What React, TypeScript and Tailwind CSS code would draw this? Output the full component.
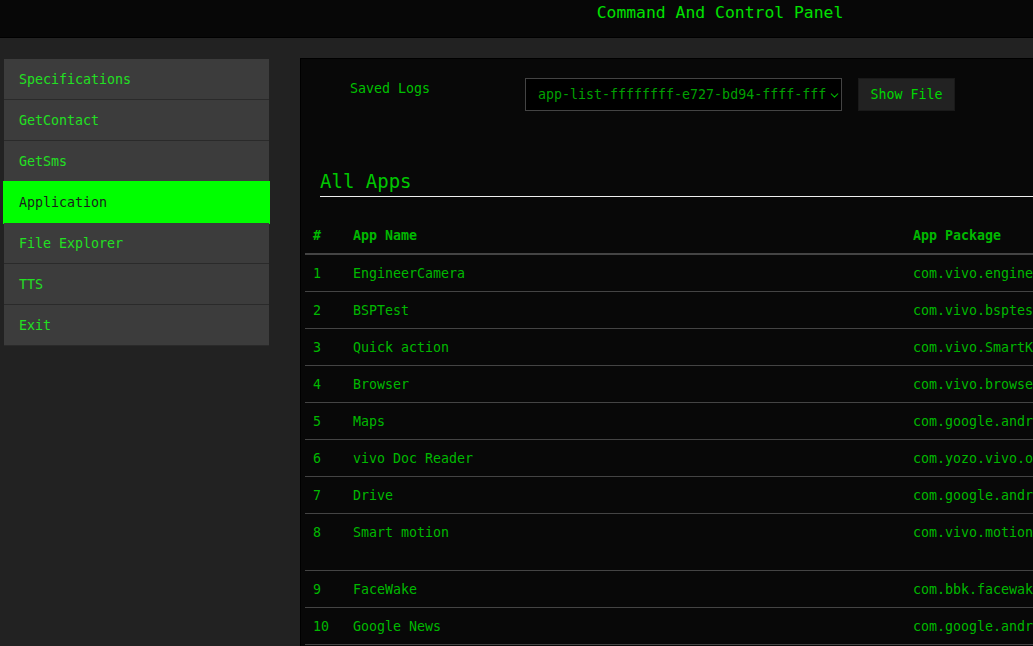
import { ChevronDown } from 'lucide-react';

const menu = ['Specifications', 'GetContact', 'GetSms', 'Application', 'File Explorer', 'TTS', 'Exit'];

const apps = [
  { name: 'EngineerCamera', pkg: 'com.vivo.engineercamera' },
  { name: 'BSPTest', pkg: 'com.vivo.bsptest' },
  { name: 'Quick action', pkg: 'com.vivo.SmartKey' },
  { name: 'Browser', pkg: 'com.vivo.browser' },
  { name: 'Maps', pkg: 'com.google.android.apps.maps' },
  { name: 'vivo Doc Reader', pkg: 'com.yozo.vivo.office' },
  { name: 'Drive', pkg: 'com.google.android.apps.docs' },
  { name: 'Smart motion', pkg: 'com.vivo.motionrecognition', tall: true },
  { name: 'FaceWake', pkg: 'com.bbk.facewake' },
  { name: 'Google News', pkg: 'com.google.android.apps.magazines' },
  { name: 'Settings', pkg: 'com.android.settings' },
  { name: 'Calculator', pkg: 'com.android.bbkcalculator' },
];

export default function App() {
  return (
    <div className="h-[646px] w-full overflow-hidden bg-[#222222] text-[13.3px] leading-4 [font-family:'DejaVu_Sans_Mono',monospace]">
      <div className="w-[1440px]">
        <header className="flex h-[38px] justify-center border-b border-black bg-[#070707] pt-[3px]">
          <h1 className="text-[16.4px] leading-[19px] text-[#00e000]">Command And Control Panel</h1>
        </header>

        <div className="flex pt-5">
          <nav className="w-[300px] shrink-0 pl-1 pt-px">
            <ul className="w-[265px]">
              {menu.map((item) => {
                const active = item === 'Application';
                return (
                  <li
                    key={item}
                    className={
                      active
                        ? 'flex h-[41px] items-center bg-[#00ff00] pt-px pl-[15px] text-[#1c1c1c] shadow-[0_0_0_1px_#00ff00]'
                        : 'flex h-[41px] items-center border-b border-[#2a2a2a] bg-[#3c3c3c] pt-px pl-[15px] text-[#22e022]'
                    }
                  >
                    {item}
                  </li>
                );
              })}
            </ul>
          </nav>

          <main className="min-h-[620px] flex-1 border-t border-l border-black bg-[#080808] pb-10">
            <div className="flex items-start pt-[19px]">
              <span className="mt-[3px] w-[224px] pl-[49px] text-[#00c000]">Saved Logs</span>
              <div className="flex h-[33px] w-[317px] items-center overflow-hidden border border-[#444] bg-black pt-px pr-[2px] pl-[12px]">
                <span className="w-[288px] shrink-0 overflow-hidden whitespace-nowrap text-[#00a000]">app-list-ffffffff-e727-bd94-ffff-fff</span>
                <ChevronDown className="ml-[2px] h-[13px] w-[13px] shrink-0 text-[#00b000]" strokeWidth={2} />
              </div>
              <button
                type="button"
                className="ml-4 h-[33px] w-[97px] border border-[#1a1a1a] bg-[#222222] pt-px text-[#00d800]"
              >
                Show File
              </button>
            </div>

            <h2 className="mt-[59px] ml-[19px] border-b border-[#eeeeee] pb-[3px] text-[19px] leading-[23px] text-[#00c800]">
              All Apps
            </h2>

            <table className="mt-5 ml-1 w-[1130px] table-fixed border-collapse text-left text-[#00b800]">
              <colgroup>
                <col className="w-[40px]" />
                <col className="w-[560px]" />
                <col />
              </colgroup>
              <thead>
                <tr className="border-b-2 border-[#444]">
                  <th className="px-2 pt-[11px] pb-[9px] font-bold">#</th>
                  <th className="px-2 pt-[11px] pb-[9px] font-bold">App Name</th>
                  <th className="px-2 pt-[11px] pb-[9px] font-bold">App Package</th>
                </tr>
              </thead>
              <tbody>
                {apps.map((a, i) => (
                  <tr key={a.pkg} className="border-b border-[#444]">
                    <td className={a.tall ? 'px-2 pt-[11px] pb-[29px] align-top' : 'px-2 pt-[11px] pb-[9px] align-top'}>{i + 1}</td>
                    <td className={a.tall ? 'px-2 pt-[11px] pb-[29px] align-top' : 'px-2 pt-[11px] pb-[9px] align-top'}>{a.name}</td>
                    <td className={a.tall ? 'px-2 pt-[11px] pb-[29px] align-top' : 'px-2 pt-[11px] pb-[9px] align-top'}>{a.pkg}</td>
                  </tr>
                ))}
              </tbody>
            </table>
          </main>
        </div>
      </div>
    </div>
  );
}
